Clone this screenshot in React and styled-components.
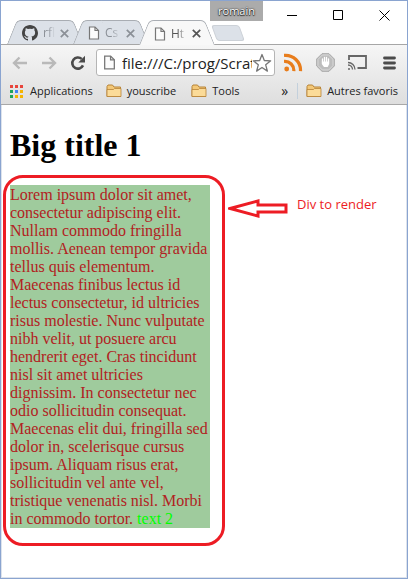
import React from 'react';
import styled, { createGlobalStyle, css } from 'styled-components';

const GlobalStyle = createGlobalStyle`
  *, *::before, *::after { box-sizing: border-box; }
  body { margin: 0; background: #fff; }
  button { padding: 0; border: 0; background: none; color: inherit; font: inherit; }
  svg { display: block; flex: none; }
`;

const Window = styled.div`
  display: flex;
  flex-direction: column;
  min-height: 100vh;
  border: 1px solid #8aa4d0;
  background: #fff;
  color: #222;
  font: 11px/16px "Open Sans", "Noto Sans", sans-serif;
`;

const TitleBar = styled.header`
  position: relative;
  display: flex;
  height: 43px;
  padding-left: 6px;
`;

const UserBadge = styled.button`
  position: absolute;
  top: 0;
  left: 209px;
  width: 53px;
  height: 20px;
  background: #ababab;
  color: #fff;
  line-height: 20px;
  text-shadow: 0 0 1px #222, 0 1px 1px #222, 0 0 2px #444;
`;

const TabList = styled.nav`
  display: flex;
  align-items: flex-end;
`;

const tabSide = css`
  content: "";
  position: absolute;
  z-index: -1;
  top: 0;
  bottom: 0;
  width: 50%;
  border-top: 1px solid #a9adb3;
  background: ${(p) => (p.$active ? '#f8f8f8' : '#dce1e8')};
`;

const Tab = styled.div`
  position: relative;
  z-index: ${(p) => (p.$active ? 2 : 0)};
  isolation: isolate;
  display: flex;
  align-items: center;
  width: 76px;
  height: ${(p) => (p.$active ? 25 : 24)}px;
  padding: 2px 14px 0 15px;
  margin-bottom: ${(p) => (p.$active ? '-1px' : '0')};
  color: ${(p) => (p.$active ? '#555' : '#8b9097')};
  & + & { margin-left: -10px; }
  &::before {
    ${tabSide}
    left: 0;
    border-left: 1px solid #a9adb3;
    border-top-left-radius: 5px;
    transform: skewX(-22deg);
    transform-origin: bottom;
  }
  &::after {
    ${tabSide}
    right: 0;
    border-right: 1px solid #a9adb3;
    border-top-right-radius: 5px;
    transform: skewX(22deg);
    transform-origin: bottom;
  }
`;

const TabLabel = styled.button`
  flex: 1;
  min-width: 0;
  margin-left: 5px;
  font-size: 12px;
  text-align: left;
  white-space: nowrap;
  mask-image: linear-gradient(to right, #000 35%, transparent 85%);
`;

const CloseTab = styled.button`
  margin-left: 3px;
`;

const NewTab = styled.button`
  width: 28px;
  height: 16px;
  margin: 0 0 3px -1px;
  border: 1px solid #ccd1d7;
  border-radius: 3px;
  background: #dce1e8;
  transform: skewX(20deg);
`;

const WindowControls = styled.div`
  display: flex;
  margin-left: auto;
`;

const WindowButton = styled.button`
  display: flex;
  justify-content: center;
  width: 46px;
  height: 28px;
  padding-top: 9px;
  color: #000;
`;

const Chrome = styled.div`
  border-top: 1px solid #a6a6a6;
  border-bottom: 1px solid #a8a8a8;
  background: linear-gradient(#f6f6f6, #dedede);
`;

const Toolbar = styled.div`
  display: flex;
  align-items: center;
  height: 35px;
  padding: 0 11px;
`;

const ToolButton = styled.button`
  margin-right: ${(p) => p.$gap || 0}px;
`;

const AddressBar = styled.label`
  display: flex;
  flex: 1;
  align-items: center;
  min-width: 0;
  height: 27px;
  margin-right: 9px;
  padding: 0 2px 0 6px;
  border: 1px solid #b5b5b5;
  border-radius: 3px;
  background: #fff;
`;

const AddressInput = styled.input`
  flex: 1;
  min-width: 0;
  margin-left: 6px;
  padding: 0;
  border: 0;
  outline: 0;
  background: none;
  color: #222;
  font: 15px/22px "Open Sans", "Noto Sans", sans-serif;
`;

const BookmarkBar = styled.nav`
  display: flex;
  align-items: center;
  height: 24px;
  padding: 0 9px 2px;
`;

const Bookmark = styled.button`
  display: flex;
  align-items: center;
  gap: ${(p) => p.$inner || 5}px;
  margin-right: ${(p) => p.$gap || 0}px;
  white-space: nowrap;
`;

const OverflowButton = styled.button`
  margin-left: auto;
  padding: 0 9px;
  font-size: 14px;
`;

const OtherBookmarks = styled.div`
  padding-left: 8px;
  border-left: 1px solid #c3d0dc;
`;

const Page = styled.main`
  flex: 1;
  padding: 20px 8px 48px;
  border: 1px solid #dde3ec;
  border-top: 0;
  font-family: "Liberation Serif", "Times New Roman", serif;
`;

const Title = styled.h1`
  margin: 0 0 19px;
  color: #000;
  font-size: 32px;
  line-height: 41px;
`;

const Example = styled.section`
  display: flex;
  align-items: flex-start;
`;

const RenderTarget = styled.div`
  position: relative;
  flex: none;
  width: 200px;
  padding-top: 1px;
  background: #9fcb9d;
  color: #b22222;
  font-size: 16px;
  line-height: 18px;
`;

const Highlight = styled.span`
  color: #0f0;
`;

const Outline = styled.div`
  position: absolute;
  inset: -10px -15px -18px -7px;
  border: 3px solid #ed1c24;
  border-radius: 20px;
`;

const Callout = styled.p`
  display: flex;
  align-items: flex-start;
  gap: 9px;
  margin: 10px 0 0 18px;
  color: #ed1c24;
  font: 13px/18px "Open Sans", "Noto Sans", sans-serif;
  white-space: nowrap;
`;

const ArrowDrawing = styled.svg`
  margin-top: 4px;
`;

const PageIcon = ({ size = 14 }) => (
  <svg width={size - 2} height={size} viewBox="0 0 12 14" fill="#fcfcfc" stroke="#777" strokeWidth="1.2">
    <path d="M1.5 1H7l3.5 3.5V13h-9z" />
    <path d="M7 1v3.5h3.5" fill="none" />
  </svg>
);

const GithubIcon = () => (
  <svg width="16" height="16" viewBox="0 0 16 16" fill="#444">
    <path d="M8 0C3.600 0 0 3.600 0 8c0 3.500 2.300 6.500 5.500 7.600.4.100.5-.2.5-.4v-1.400c-2.200.5-2.700-1.100-2.700-1.100-.4-.9-.9-1.200-.9-1.200-.7-.5.100-.5.100-.5.800.100 1.200.800 1.200.800.700 1.200 1.900.9 2.300.700.100-.5.300-.9.500-1.100-1.800-.2-3.600-.9-3.600-4 0-.9.300-1.600.8-2.100-.1-.2-.4-1 .1-2.100 0 0 .7-.2 2.200.800a7.500 7.500 0 0 1 4 0c1.500-1 2.200-.8 2.200-.8.400 1.100.200 1.900.100 2.100.500.600.800 1.300.800 2.100 0 3.100-1.900 3.700-3.700 3.900.300.300.600.800.600 1.500v2.200c0 .200.100.5.600.4C13.700 14.500 16 11.500 16 8c0-4.400-3.600-8-8-8z" />
  </svg>
);

const CrossIcon = () => (
  <svg width="9" height="9" viewBox="0 0 9 9" stroke="currentColor" strokeWidth="1.7">
    <path d="M.8.8l7.400 7.400M8.200.8L.8 8.200" />
  </svg>
);

const ArrowIcon = ({ flipped }) => (
  <svg width="16" height="14" viewBox="0 0 16 14" fill="none" stroke="#b9b9b9" strokeWidth="2.4">
    <path d={flipped ? 'M1 7h13M8.500 1.500L14 7l-5.500 5.500' : 'M15 7H2M7.500 1.500L2 7l5.500 5.500'} />
  </svg>
);

const ReloadIcon = () => (
  <svg width="16" height="16" viewBox="0 0 16 16" fill="none">
    <path d="M13 10.400A5.600 5.600 0 1 1 11.700 3.900" stroke="#4b4b4b" strokeWidth="2.600" />
    <path d="M15 .8v6.700H8.300z" fill="#4b4b4b" />
  </svg>
);

const StarIcon = () => (
  <svg width="20" height="20" viewBox="0 0 20 20" fill="#fff" stroke="#777" strokeWidth="1.300" strokeLinejoin="round">
    <path d="M10 1.500l2.300 6 6.400.3-5 4 1.700 6.300-5.400-3.600-5.400 3.600 1.700-6.300-5-4 6.400-.3z" />
  </svg>
);

const FeedIcon = () => (
  <svg width="19" height="19" viewBox="0 0 19 19" fill="none" stroke="#e87d1c" strokeWidth="3.200">
    <circle cx="2.700" cy="16" r="2.400" fill="#e87d1c" stroke="none" />
    <path d="M0 8.400a9 9 0 0 1 9.800 9.800M0 2.400a15 15 0 0 1 16.500 15.800" />
  </svg>
);

const HandIcon = () => (
  <svg width="19" height="19" viewBox="0 0 19 19">
    <path d="M6 .7h7L18.300 6v7L13 18.300H6L.7 13V6z" fill="#bdbdbd" stroke="#a8a8a8" />
    <path d="M6.400 2h6.200L17 6.400v6.200L12.600 17H6.400L2 12.600V6.400z" fill="none" stroke="#d8d8d8" />
    <path d="M6.500 9V6M8.500 8.500V4.500M10.500 8.500V4.500M12.500 9V6" stroke="#fff" strokeWidth="1.300" strokeLinecap="round" />
    <path d="M5.800 8.500h7.400V11l-1.500 3H8l-2.200-3z" fill="#fff" />
  </svg>
);

const CastIcon = () => (
  <svg width="19" height="15" viewBox="0 0 19 15" fill="none" stroke="#666">
    <path d="M1 5V1h17v12H9.500" strokeWidth="1.800" />
    <path d="M0 7.500a7 7 0 0 1 7 7M0 10a4.500 4.500 0 0 1 4.500 4.500" strokeWidth="1.300" />
    <circle cx="1" cy="14" r="1" fill="#666" stroke="none" />
  </svg>
);

const MenuIcon = () => (
  <svg width="13" height="14" viewBox="0 0 13 14" stroke="#4b4b4b" strokeWidth="2.800" strokeLinecap="round">
    <path d="M1.500 2h10M1.500 7h10M1.500 12h10" />
  </svg>
);

const appColors = ['#e8453c', '#e8453c', '#e8453c', '#1fa45b', '#4285f4', '#f5b400', '#1fa45b', '#f5b400', '#f5b400'];

const AppsIcon = () => (
  <svg width="13" height="13" viewBox="0 0 13 13">
    {appColors.map((color, i) => (
      <rect key={i} x={(i % 3) * 5} y={Math.floor(i / 3) * 5} width="3" height="3" fill={color} />
    ))}
  </svg>
);

const FolderIcon = () => (
  <svg width="16" height="14" viewBox="0 0 16 14" stroke="#b78337">
    <path d="M1 12.500V2.500l1-1.500h4.500l1.500 2h6.500v9.500z" fill="#f3c878" />
    <path d="M1 12.500V5.500h6.500l1-1H15v8z" fill="#fbdb98" strokeWidth=".8" />
  </svg>
);

const tabs = [
  { label: 'rfl', icon: <GithubIcon /> },
  { label: 'Cs', icon: <PageIcon /> },
  { label: 'Ht', icon: <PageIcon />, active: true },
];

export default function App() {
  return (
    <Window>
      <GlobalStyle />
      <TitleBar>
        <TabList aria-label="Tabs">
          {tabs.map((tab) => (
            <Tab key={tab.label} $active={tab.active}>
              {tab.icon}
              <TabLabel>{tab.label}</TabLabel>
              <CloseTab aria-label="Close tab"><CrossIcon /></CloseTab>
            </Tab>
          ))}
          <NewTab aria-label="New tab" />
        </TabList>
        <UserBadge>romain</UserBadge>
        <WindowControls>
          <WindowButton aria-label="Minimize">
            <svg width="11" height="11" stroke="currentColor"><path d="M0 5.500h10" /></svg>
          </WindowButton>
          <WindowButton aria-label="Maximize">
            <svg width="11" height="11" fill="none" stroke="currentColor"><path d="M.5.5h9v9h-9z" /></svg>
          </WindowButton>
          <WindowButton aria-label="Close">
            <svg width="11" height="11" stroke="currentColor"><path d="M.5.5l10 10M10.500.5l-10 10" /></svg>
          </WindowButton>
        </WindowControls>
      </TitleBar>

      <Chrome>
        <Toolbar>
          <ToolButton $gap={13} aria-label="Back"><ArrowIcon /></ToolButton>
          <ToolButton $gap={13} aria-label="Forward"><ArrowIcon flipped /></ToolButton>
          <ToolButton $gap={10} aria-label="Reload"><ReloadIcon /></ToolButton>
          <AddressBar>
            <PageIcon size={15} />
            <AddressInput aria-label="Address" defaultValue="file:///C:/prog/Scratch" />
            <ToolButton aria-label="Bookmark this page"><StarIcon /></ToolButton>
          </AddressBar>
          <ToolButton $gap={13} aria-label="Feeds"><FeedIcon /></ToolButton>
          <ToolButton $gap={13} aria-label="Blocker"><HandIcon /></ToolButton>
          <ToolButton $gap={16} aria-label="Cast"><CastIcon /></ToolButton>
          <ToolButton aria-label="Menu"><MenuIcon /></ToolButton>
        </Toolbar>
        <BookmarkBar aria-label="Bookmarks">
          <Bookmark $inner={7} $gap={13}><AppsIcon />Applications</Bookmark>
          <Bookmark $gap={15}><FolderIcon />youscribe</Bookmark>
          <Bookmark><FolderIcon />Tools</Bookmark>
          <OverflowButton aria-label="More bookmarks">»</OverflowButton>
          <OtherBookmarks>
            <Bookmark><FolderIcon />Autres favoris</Bookmark>
          </OtherBookmarks>
        </BookmarkBar>
      </Chrome>

      <Page>
        <Title>Big title 1</Title>
        <Example>
          <RenderTarget>
            Lorem ipsum dolor sit amet, consectetur adipiscing elit. Nullam commodo fringilla mollis.
            Aenean tempor gravida tellus quis elementum. Maecenas finibus lectus id lectus consectetur,
            id ultricies risus molestie. Nunc vulputate nibh velit, ut posuere arcu hendrerit eget.
            Cras tincidunt nisl sit amet ultricies dignissim. In consectetur nec odio sollicitudin
            consequat. Maecenas elit dui, fringilla sed dolor in, scelerisque cursus ipsum. Aliquam
            risus erat, sollicitudin vel ante vel, tristique venenatis nisl. Morbi in commodo
            tortor. <Highlight>text 2</Highlight>
            <Outline />
          </RenderTarget>
          <Callout>
            <ArrowDrawing width="60" height="19" viewBox="0 0 60 19" fill="#fff" stroke="#ed1c24" strokeWidth="3">
              <path d="M2 9.500L30 2v4h28v7H30v4z" />
            </ArrowDrawing>
            Div to render
          </Callout>
        </Example>
      </Page>
    </Window>
  );
}
